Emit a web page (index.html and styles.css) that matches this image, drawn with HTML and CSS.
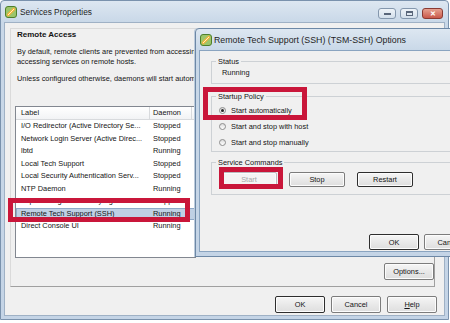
FILE: index.html
```html
<!DOCTYPE html>
<html lang="en">
<head>
    <meta charset="UTF-8">
    <title>Services Properties</title>
    <link rel="stylesheet" href="styles.css">
</head>
<body>
    <div class="window main">
        <div class="titlebar">
            <svg class="app-icon" width="12" height="12" viewBox="0 0 12 12">
                <rect x="0.5" y="0.5" width="11" height="11" rx="2.5" fill="#9cc56a" stroke="#4e7f2b"/>
                <path d="M3.2 8.8 L8.8 3.2" stroke="#f2b23a" stroke-width="3" stroke-linecap="round"/>
                <path d="M3.2 8.8 L8.8 3.2" stroke="#fff3c2" stroke-width="1" stroke-linecap="round"/>
            </svg>
            <span class="title">Services Properties</span>
            <div class="caption-buttons">
                <span class="cap cap-min"><span class="glyph-min"></span></span>
                <span class="cap cap-max"><span class="glyph-max"></span></span>
                <span class="cap cap-close">&#x2715;</span>
            </div>
        </div>
        <div class="client">
            <div class="page">
                <h2 class="section-title">Remote Access</h2>
                <p class="info">By default, remote clients are prevented from accessing services on this host, and local clients are prevented from<br>accessing services on remote hosts.</p>
                <p class="info">Unless configured otherwise, daemons will start automatically if any of their ports are opened, and stop when all of their ports are closed.</p>

                <div class="list">
                    <div class="list-head">
                        <span class="col-label">Label</span>
                        <span class="col-daemon">Daemon</span>
                        <span class="col-rest"></span>
                    </div>
                    <div class="list-row"><span>I/O Redirector (Active Directory Se...</span><span>Stopped</span></div>
                    <div class="list-row"><span>Network Login Server (Active Direc...</span><span>Stopped</span></div>
                    <div class="list-row"><span>lbtd</span><span>Running</span></div>
                    <div class="list-row"><span>Local Tech Support</span><span>Stopped</span></div>
                    <div class="list-row"><span>Local Security Authentication Serv...</span><span>Stopped</span></div>
                    <div class="list-row"><span>NTP Daemon</span><span>Running</span></div>
                    <div class="list-row"><span>vSphere High Availability Agent</span><span>Stopped</span></div>
                    <div class="list-row selected"><span>Remote Tech Support (SSH)</span><span>Running</span></div>
                    <div class="list-row"><span>Direct Console UI</span><span>Running</span></div>
                </div>

                <div class="page-actions">
                    <button class="btn">Options...</button>
                </div>
            </div>
            <div class="footer">
                <button class="btn default">OK</button>
                <button class="btn">Cancel</button>
                <button class="btn"><u>H</u>elp</button>
            </div>
        </div>
    </div>

    <div class="window dialog">
        <div class="titlebar">
            <svg class="app-icon" width="12" height="12" viewBox="0 0 12 12">
                <rect x="0.5" y="0.5" width="11" height="11" rx="2.5" fill="#9cc56a" stroke="#4e7f2b"/>
                <path d="M3.2 8.8 L8.8 3.2" stroke="#f2b23a" stroke-width="3" stroke-linecap="round"/>
                <path d="M3.2 8.8 L8.8 3.2" stroke="#fff3c2" stroke-width="1" stroke-linecap="round"/>
            </svg>
            <span class="title">Remote Tech Support (SSH) (TSM-SSH) Options</span>
        </div>
        <div class="client">
            <fieldset class="group group-status">
                <legend>Status</legend>
                <div class="status-text">Running</div>
            </fieldset>
            <fieldset class="group group-policy">
                <legend>Startup Policy</legend>
                <div class="radio"><span class="radio-dot checked"></span>Start automatically</div>
                <div class="radio"><span class="radio-dot"></span>Start and stop with host</div>
                <div class="radio"><span class="radio-dot"></span>Start and stop manually</div>
            </fieldset>
            <fieldset class="group group-commands">
                <legend>Service Commands</legend>
                <div class="command-row">
                    <button class="btn cmd" disabled>Start</button>
                    <button class="btn cmd">Stop</button>
                    <button class="btn cmd default">Restart</button>
                </div>
            </fieldset>
            <div class="footer dialog-footer">
                <button class="btn default">OK</button>
                <button class="btn">Cancel</button>
            </div>
        </div>
    </div>

    <!-- red callouts drawn over the screenshot -->
    <div class="mark mark-policy"></div>
    <div class="mark mark-start"></div>
    <div class="mark mark-row"></div>
</body>
</html>
```

FILE: styles.css
```css
* {
    box-sizing: border-box;
}
body {
    margin: 0;
    width: 450px;
    height: 323px;
    overflow: hidden;
    position: relative;
    background: #fff;
    font-family: "Liberation Sans", Arial, sans-serif;
    font-size: 7.4px;
    color: #141414;
}

/* window frames */
.window {
    display: flex;
    flex-direction: column;
    border: 1px solid #7a92ad;
    border-radius: 4px 4px 0 0;
    background: linear-gradient(#dde7f1, #c9d8e8 21px, #c4d4e6);
}
.main {
    width: 449px;
    height: 320px;
    padding: 0 3px 3px 3px;
}
.titlebar {
    flex: none;
    height: 21px;
    display: flex;
    align-items: center;
    gap: 3px;
    padding-left: 1px;
    white-space: nowrap;
}
.app-icon {
    flex: none;
}
.title {
    font-size: 8.3px;
    color: #1e1e1e;
}
.caption-buttons {
    margin-left: auto;
    align-self: flex-start;
    display: flex;
    gap: 4px;
    margin-top: 7px;
    margin-right: 2px;
}
.cap {
    height: 11px;
    width: 18px;
    border: 1px solid #8497ad;
    border-radius: 3px;
    background: linear-gradient(#eef3f8, #d3dfeb);
    display: flex;
    align-items: center;
    justify-content: center;
}
.glyph-min {
    width: 7px;
    height: 2px;
    background: #59667a;
}
.glyph-max {
    width: 7px;
    height: 5px;
    border: 1px solid #59667a;
    border-top-width: 2px;
}
.cap-close {
    width: 21px;
    border-color: #8a3a32;
    background: linear-gradient(#e6a190, #c9584a);
    color: #fff;
    font-size: 7px;
    font-weight: bold;
}
.client {
    flex: 1;
    display: flex;
    flex-direction: column;
    background: #f0f0f0;
    border: 1px solid #9fb1c5;
}

/* main page */
.page {
    margin: 5px 9px 0 5px;
    height: 259px;
    border: 1px solid;
    border-color: #dadada #a0a0a0 #a0a0a0 #dadada;
    padding: 0 0 0 4px;
    white-space: nowrap;
    overflow: hidden;
}
.section-title {
    margin: 1px 0 0 2px;
    font-size: 8px;
    line-height: 10px;
    font-weight: bold;
}
.info {
    margin: 7px 0 0 2px;
    line-height: 10px;
}
.list {
    margin-top: 22px;
    width: 181px;
    height: 152px;
    border: 1px solid #828790;
    background: #fff;
}
.list-head {
    display: flex;
    height: 13px;
    background: linear-gradient(#fff, #f2f3f5);
    border-bottom: 1px solid #d8dadd;
}
.list-head span {
    line-height: 12px;
    border-right: 1px solid #d8dadd;
}
.col-label {
    width: 134px;
    padding-left: 5px;
}
.col-daemon {
    width: 42px;
    padding-left: 3px;
}
.col-rest {
    flex: 1;
    border-right: none !important;
}
.list-row {
    display: grid;
    grid-template-columns: 134px 42px;
    height: 12.5px;
    line-height: 12.5px;
}
.list-row span:first-child {
    padding-left: 5px;
    overflow: hidden;
}
.list-row span:last-child {
    padding-left: 3px;
}
.list-row.selected {
    background: #bfd0e4;
    box-shadow: inset 0 0 0 1px #8ea8c7;
}
.page-actions {
    display: flex;
    justify-content: flex-end;
    margin-top: 5px;
}
.footer {
    display: flex;
    justify-content: flex-end;
    gap: 6px;
    margin-top: 9px;
    padding-right: 7px;
}

/* buttons */
.btn {
    width: 50px;
    height: 17px;
    padding: 0;
    font-family: inherit;
    font-size: 7.4px;
    color: #141414;
    border: 1px solid #7c7c7c;
    border-radius: 2px;
    background: linear-gradient(#f6f6f6, #e9e9e9 50%, #dedede);
    box-shadow: inset 0 0 0 1px #fcfcfc;
}
.btn.default {
    border-color: #2e2e2e;
}
.btn:disabled {
    color: #a6a6a6;
    border-color: #b9bcbf;
    background: #f4f4f4;
}

/* dialog window */
.dialog {
    position: absolute;
    left: 195px;
    top: 28px;
    width: 300px;
    height: 229px;
    padding: 0 3px 4px 3px;
    border-color: #6d88a6;
    box-shadow: -1px 0 0 #bccbdc;
}
.dialog .titlebar {
    gap: 2px;
}
.dialog .title {
    font-size: 8.8px;
}
.dialog .client {
    border-color: #8aa4c0;
}
.group {
    margin: 6px 12px 0 11px;
    min-inline-size: 0;
    border: 1px solid #cdd1d5;
    padding: 2px 4px 5px 4px;
}
.group legend {
    padding: 0 2px;
    line-height: 9px;
}
.status-text {
    line-height: 10px;
    padding-left: 6px;
}
.group-policy {
    margin-top: 8px;
    padding-top: 1px;
    padding-bottom: 1px;
}
.radio {
    display: flex;
    align-items: center;
    gap: 5px;
    height: 16px;
    padding-left: 3px;
}
.radio-dot {
    width: 7px;
    height: 7px;
    border-radius: 50%;
    border: 1px solid #8d8d8d;
    background: linear-gradient(#dcdcdc, #fff);
    display: flex;
    align-items: center;
    justify-content: center;
}
.radio-dot.checked::after {
    content: "";
    width: 3px;
    height: 3px;
    border-radius: 50%;
    background: #262626;
}
.group-commands {
    margin-top: 6px;
    padding-top: 5px;
    padding-bottom: 7px;
}
.command-row {
    display: flex;
    gap: 12px;
    padding-left: 5px;
}
.btn.cmd {
    width: 56px;
    height: 15px;
}
.dialog-footer {
    margin-top: auto;
    gap: 5px;
    padding-right: 16px;
    padding-bottom: 1px;
}
.dialog-footer .btn {
    height: 16px;
}

/* red annotation boxes */
.mark {
    position: absolute;
    border: 5px solid #c9163a;
}
.mark-policy {
    left: 203px;
    top: 87px;
    width: 104px;
    height: 33px;
}
.mark-start {
    left: 219px;
    top: 167px;
    width: 64px;
    height: 22px;
}
.mark-row {
    left: 8px;
    top: 198px;
    width: 182px;
    height: 24px;
}
```
